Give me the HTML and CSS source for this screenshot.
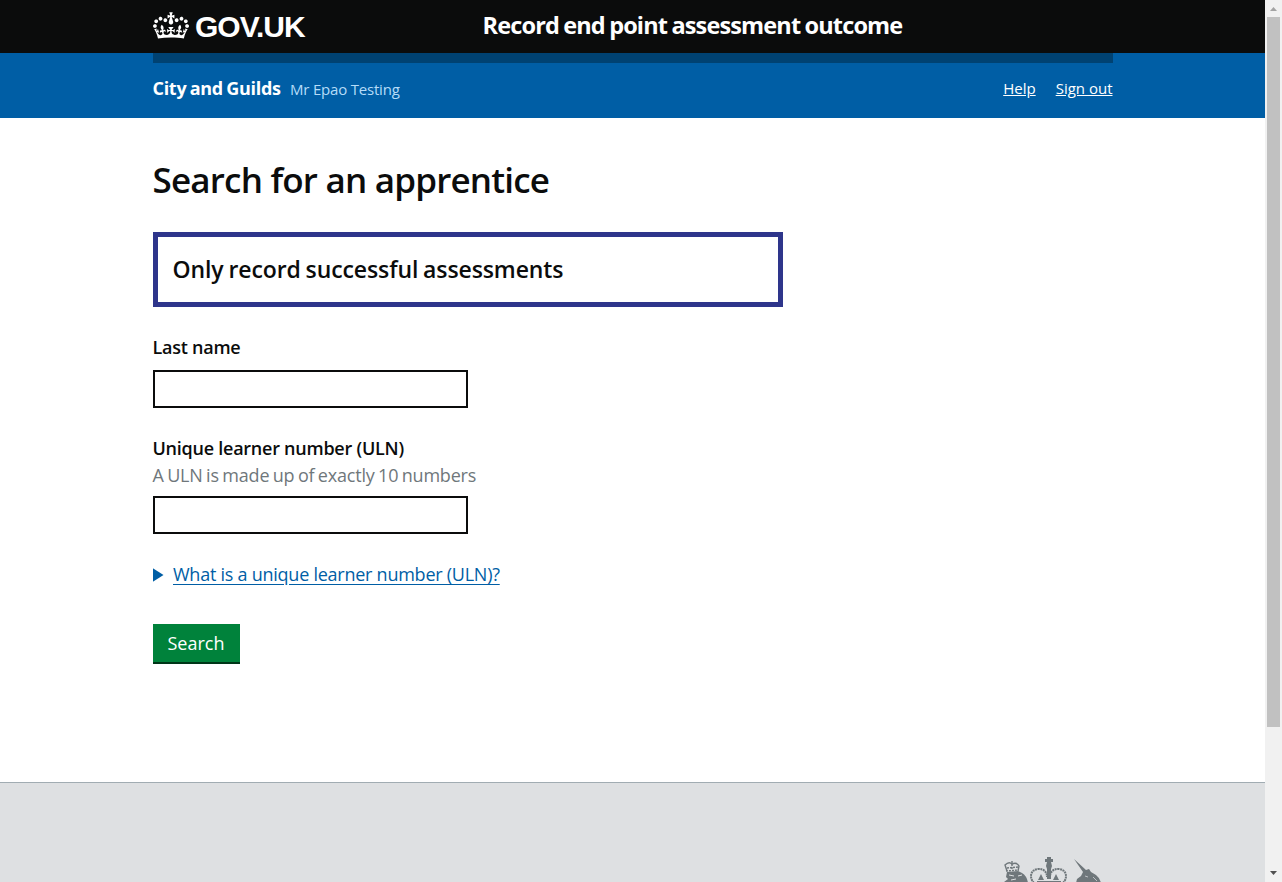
FILE: index.html
```
<!DOCTYPE html>
<html lang="en">
<head>
<meta charset="utf-8">
<title>Search for an apprentice</title>
<link rel="stylesheet" href="styles.css">
</head>
<body>
<div class="page">
  <header class="header">
    <div class="container header-row">
      <a class="logo" href="#">
        <svg class="crown" viewBox="0 0 132 97" fill="currentColor" aria-hidden="true"><path d="M25 30.2c3.5 1.5 7.7-.2 9.1-3.7 1.5-3.6-.2-7.8-3.9-9.2-3.6-1.4-7.6.3-9.1 3.9-1.4 3.5.3 7.5 3.9 9zM9 39.5c3.6 1.5 7.8-.2 9.2-3.7 1.5-3.6-.2-7.8-3.9-9.1-3.6-1.5-7.6.2-9.1 3.8-1.4 3.5.3 7.5 3.8 9zM4.4 57.2c3.5 1.5 7.7-.2 9.1-3.8 1.5-3.6-.2-7.7-3.9-9.1-3.5-1.5-7.6.3-9.1 3.8-1.4 3.5.3 7.6 3.9 9.1zm38.3-21.4c3.5 1.5 7.7-.2 9.1-3.8 1.5-3.6-.2-7.7-3.9-9.1-3.6-1.5-7.6.3-9.1 3.8-1.3 3.6.4 7.7 3.9 9.1zm64.4-5.6c-3.6 1.5-7.8-.2-9.1-3.7-1.5-3.6.2-7.8 3.8-9.2 3.6-1.4 7.7.3 9.2 3.9 1.3 3.5-.4 7.5-3.9 9zm15.9 9.3c-3.6 1.5-7.7-.2-9.1-3.7-1.5-3.6.2-7.8 3.7-9.1 3.6-1.5 7.7.2 9.2 3.8 1.5 3.5-.3 7.5-3.8 9zm4.7 17.7c-3.6 1.5-7.8-.2-9.2-3.8-1.5-3.6.2-7.7 3.9-9.1 3.6-1.5 7.7.3 9.2 3.8 1.3 3.5-.4 7.6-3.9 9.1zM89.3 35.8c-3.6 1.5-7.8-.2-9.2-3.8-1.4-3.6.2-7.7 3.9-9.1 3.6-1.5 7.7.3 9.2 3.8 1.4 3.6-.3 7.7-3.9 9.1zM69.7 17.7l8.9 4.7V9.3l-8.9 2.8c-.2-.3-.5-.6-.9-.9L72.4 0H59.6l3.5 11.2c-.3.3-.6.5-.9.9l-8.8-2.8v13.1l8.8-4.7c.3.3.6.7.9.9l-5 15.4v.1c-.2.8-.4 1.6-.4 2.4 0 4.1 3.1 7.5 7 8.1h.2c.3 0 .7.1 1 .1.4 0 .7 0 1-.1h.2c4-.6 7.1-4.1 7.1-8.1 0-.8-.1-1.7-.4-2.4V34l-5.1-15.4c.4-.2.7-.6 1-.9zM66 92.8c16.9 0 32.8 1.1 47.1 3.2 4-16.9 8.9-26.7 14-33.5l-9.6-3.4c1 4.9 1.1 7.2 0 10.2-1.5-1.4-3-4.3-4.2-8.7L108.6 76c2.8-2 5-3.2 7.5-3.3-4.4 9.4-10 11.9-13.6 11.2-4.3-.8-6.3-4.6-5.6-7.9 1-4.7 5.7-5.9 8-.5 4.3-8.7-3-11.4-7.6-8.8 7.1-7.2 7.9-13.5 2.1-21.1-8 6.1-8.1 12.3-4.5 20.8-4.7-5.4-12.1-2.5-9.5 6.2 3.4-5.2 7.9-2 7.2 3.1-.6 4.3-6.4 7.8-13.5 7.2-10.3-.9-10.9-8-11.2-13.8 2.5-.5 7.1 1.8 11 7.3L80.2 60c-4.1 4.4-8 5.3-12.3 5.4 1.4-4.4 8-11.6 8-11.6H55.5s6.4 7.2 7.9 11.6c-4.2-.1-8-1-12.3-5.4l1.4 16.4c3.9-5.5 8.5-7.7 10.9-7.3-.3 5.8-.9 12.8-11.1 13.8-7.2.6-12.9-2.9-13.5-7.2-.7-5 3.8-8.3 7.1-3.1 2.7-8.7-4.6-11.6-9.4-6.2 3.7-8.5 3.6-14.7-4.6-20.8-5.8 7.6-5 13.9 2.2 21.1-4.7-2.6-11.9.1-7.7 8.8 2.3-5.5 7.1-4.2 8.1.5.7 3.3-1.3 7.1-5.7 7.9-3.5.7-9-1.8-13.5-11.2 2.5.1 4.7 1.3 7.5 3.3l-4.7-15.4c-1.2 4.4-2.7 7.2-4.3 8.7-1.1-3-.9-5.3 0-10.2l-9.5 3.4c5 6.9 9.9 16.7 14 33.5 14.8-2.1 30.8-3.2 47.7-3.2z"/></svg>
        <span class="logo-text">GOV.UK</span>
      </a>
      <a class="service" href="#">Record end point assessment outcome</a>
    </div>
  </header>
  <div class="account">
    <div class="container">
      <div class="strip"></div>
      <div class="account-row">
        <span class="org">City and Guilds</span>
        <span class="user">Mr Epao Testing</span>
        <nav class="links"><a class="help" href="#">Help</a><a class="signout" href="#">Sign out</a></nav>
      </div>
    </div>
  </div>
  <main class="container main">
    <h1 class="title">Search for an apprentice</h1>
    <div class="panel"><span class="panel-text">Only record successful assessments</span></div>
    <form class="form">
      <label class="label" for="name"><span class="name-label">Last name</span></label>
      <input class="input" id="name" type="text">
      <label class="label label-uln" for="uln"><span class="uln-label">Unique learner number (ULN)</span></label>
      <span class="hint">A ULN is made up of exactly 10 numbers</span>
      <input class="input input-uln" id="uln" type="text">
      <div class="details"><span class="arrow"></span><a class="summary" href="#">What is a unique learner number (ULN)?</a></div>
      <button class="button" type="button">Search</button>
    </form>
  </main>
  <footer class="footer">
    <div class="container footer-row">
      <svg class="arms" viewBox="0 0 125 26" fill="#6f777b" aria-hidden="true">
        <g fill="none" stroke="#6f777b" stroke-width="1.4"><path d="M19 14l-2-6q4-4 7-1 5-2 7 2l-1 5"/><path d="M19 11l11-1M24 4v9M18 14l12-1" stroke-dasharray="2 1"/></g>
        <path d="M19 15l11-1 4 2q5 3 6 10H19l-3-1 4-3-2-2z"/>
        <path d="M21 18l5 1M30 19l4-1M23 23l5-1" stroke="#dee0e2" fill="none"/>
        <g fill="none" stroke="#6f777b" stroke-width="2" stroke-dasharray="2 .6"><path d="M46 26c-5-5-4-14 5-14 5 0 8 3 8 8"/><path d="M75 26c5-5 4-14-5-14-5 0-8 3-8 8"/></g>
        <path d="M59 0h4v2h2v3h-2l1 4-1 3v10h-4V12l-1-3 1-4h-2V2h2zM53 17l3 6h-6zM68 17l3 6h-6zM49 24h24v2H49z"/>
        <path d="M86 2l12 11 3-1 2 3 5 3q4 3 5 8H88l1-4 4-3 2-4z"/>
        <path d="M97 19l3 1M105 20l4 4" stroke="#dee0e2" stroke-width=".7"/>
      </svg>
    </div>
  </footer>
</div>
<div class="scrollbar"><i class="up"></i><div class="thumb"></div><i class="down"></i></div>
</body>
</html>
```
FILE: styles.css
```
* { box-sizing: border-box; }
body { margin: 0; height: 882px; display: flex; overflow: hidden; background: #fff; color: #0b0c0c; font-family: "Open Sans", "Noto Sans", sans-serif; }
a { color: inherit; text-decoration: none; }
span, a, h1 { white-space: nowrap; }
.page { width: 1265px; height: 882px; display: flex; flex-direction: column; overflow: hidden; }
.container { width: 960px; margin: 0 0 0 152.5px; }
.header { height: 53px; background: #0b0c0c; color: #fff; }
.header-row { display: flex; height: 53px; }
.logo { display: flex; width: 330px; padding-top: 12px; }
.crown { width: 36px; height: 27px; margin-right: 6.5px; }
.logo-text { font: bold 30px/30px "Liberation Sans", sans-serif; letter-spacing: -1px; }
.service { font-size: 23.5px; font-weight: 700; line-height: 50px; letter-spacing: -.85px; word-spacing: -1px; }
.account { height: 65px; background: #005ea5; color: #fff; }
.strip { height: 10px; background: #004272; }
.account-row { display: flex; height: 51px; line-height: 51px; }
.org { width: 137.5px; font-size: 18px; font-weight: 700; letter-spacing: -.3px; word-spacing: -1px; }
.user { font-size: 15px; line-height: 53px; letter-spacing: -.2px; color: #b5dcf8; }
.links { margin-left: auto; display: flex; gap: 20px; font-size: 15px; }
.links a { text-decoration: underline; }
.main { height: 664px; }
.title { margin: 0; padding-top: 38px; font-size: 35px; font-weight: 650; line-height: 48px; letter-spacing: -.8px; }
.panel { margin-top: 28px; width: 630px; height: 75px; padding-left: 15px; border: 5px solid #2e358b; font-size: 23px; font-weight: 600; line-height: 65px; letter-spacing: -.1px; word-spacing: -1px; }
.form { display: flex; flex-direction: column; align-items: flex-start; padding-top: 28px; }
.label { height: 26px; font-size: 18px; font-weight: 600; line-height: 24px; letter-spacing: -.25px; }
.input { width: 315px; height: 38px; margin: 9px 0 0; border: 2px solid #0b0c0c; background: #fff; }
.label-uln { margin-top: 28px; }
.hint { height: 27px; font-size: 18px; line-height: 26px; letter-spacing: -.2px; word-spacing: -1px; color: #6f777b; }
.input-uln { margin-top: 7px; }
.details { display: flex; align-items: center; height: 28px; margin-top: 27px; color: #005ea5; font-size: 18px; }
.arrow { width: 11px; height: 14px; margin-right: 9.5px; background: #005ea5; clip-path: polygon(0 0, 100% 50%, 0 100%); }
.summary { padding-bottom: 2px; letter-spacing: -.25px; text-decoration: underline; text-underline-offset: 3px; }
.button { width: 87px; height: 40px; margin-top: 35px; padding: 0; border: 0; border-bottom: 2px solid #003618; background: #00823b; color: #fff; font: 18px/38px "Open Sans", sans-serif; }
.footer { height: 100px; background: #dee0e2; border-top: 1px solid #a1acb2; }
.footer-row { display: flex; justify-content: flex-end; padding-top: 74px; }
.arms { width: 125px; height: 26px; }
.scrollbar { width: 17px; height: 882px; background: #f1f1f1; display: flex; flex-direction: column; align-items: center; }
.up { margin-top: 7px; width: 7px; height: 4px; background: #a3a3a3; clip-path: polygon(50% 0, 100% 100%, 0 100%); }
.thumb { margin-top: 6px; width: 13px; height: 710px; background: #c1c1c1; }
.down { margin-top: 144px; width: 7px; height: 4px; background: #505050; clip-path: polygon(0 0, 100% 0, 50% 100%); }
```
